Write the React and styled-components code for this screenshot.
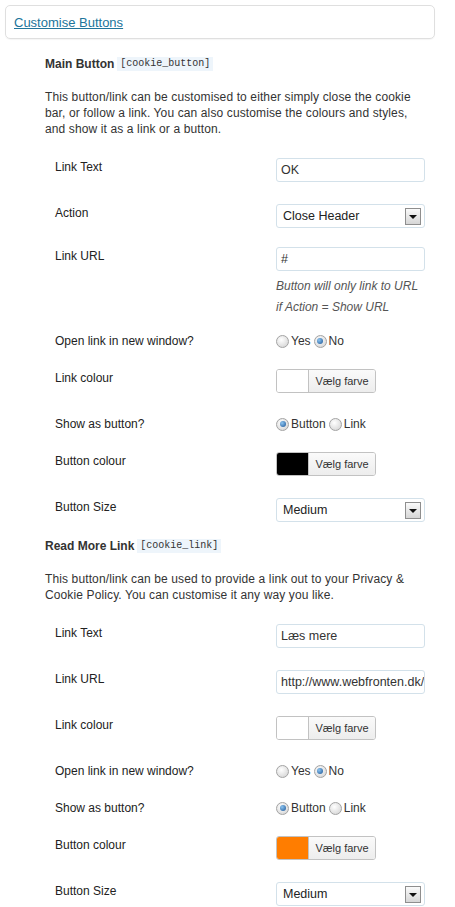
import React from 'react'
import styled, { createGlobalStyle } from 'styled-components'

const GlobalStyle = createGlobalStyle`
  body {
    margin: 0;
    background: #fff;
    font-family: "Liberation Sans", Arial, sans-serif;
    font-size: 12px;
    color: #333;
  }
`

const Page = styled.div`
  padding: 5px;
  width: 445px;
  box-sizing: border-box;
`

const Postbox = styled.div`
  width: 430px;
  height: 34px;
  box-sizing: border-box;
  border: 1px solid #dfdfdf;
  border-radius: 5px;
  padding: 0 8px;
  display: flex;
  align-items: center;
  margin-bottom: 18px;
  box-shadow: 0 1px 1px rgba(0, 0, 0, 0.04);
`

const PostboxTitle = styled.a`
  font-size: 13px;
  color: #21759b;
  text-decoration: underline;
  cursor: pointer;
`

const Section = styled.div`
  padding-left: 40px;
`

const Heading = styled.h4`
  margin: 3px 0 0;
  display: flex;
  align-items: center;
  gap: 3px;
  height: 14px;
  font-size: 12px;
  font-weight: bold;
  color: #333;
`

const Code = styled.code`
  font-family: "Liberation Mono", "DejaVu Sans Mono", monospace;
  font-size: 10px;
  font-weight: normal;
  line-height: 14px;
  padding: 0 3px;
  background: #eef5fb;
  color: #333;
`

const Intro = styled.p`
  margin: 18px 0 13px;
  width: 375px;
  line-height: 16px;
  letter-spacing: 0.12px;
`

const Table = styled.div`
  display: flex;
  flex-direction: column;
`

const Row = styled.div`
  display: grid;
  grid-template-columns: 231px 150px;
  height: ${p => p.$h}px;
`

const Label = styled.div`
  padding: 10px 0 0 10px;
  line-height: 14px;
  color: #222;
`

const Cell = styled.div`
  padding-top: ${p => p.$pt}px;
`

const TextInput = styled.div`
  width: 149px;
  height: 24px;
  box-sizing: border-box;
  border: 1px solid #d3e1ea;
  border-radius: 3px;
  padding: 0 4px;
  font-size: 12.5px;
  line-height: 22px;
  color: #333;
  white-space: nowrap;
  overflow: hidden;
`

const Select = styled.div`
  width: 149px;
  height: 24px;
  box-sizing: border-box;
  border: 1px solid #d3e1ea;
  border-radius: 3px;
  padding: 0 3px 0 6px;
  display: flex;
  align-items: center;
  justify-content: space-between;
  font-size: 12.5px;
  color: #222;
`

const Arrow = styled.span`
  width: 16px;
  height: 17px;
  box-sizing: border-box;
  border: 1px solid #8e8e8e;
  background: linear-gradient(#fafafa, #d6d6d6);
  display: flex;
  align-items: center;
  justify-content: center;

  &::after {
    content: '';
    border-left: 4px solid transparent;
    border-right: 4px solid transparent;
    border-top: 4px solid #111;
    margin-top: 1px;
  }
`

const Description = styled.div`
  margin-top: 5px;
  font-style: italic;
  line-height: 21px;
  color: #555;
`

const RadioGroup = styled.div`
  display: flex;
  align-items: center;
  height: 20px;
  color: #333;
`

const RadioOption = styled.label`
  display: flex;
  align-items: center;
  gap: 2px;
  margin-right: 3px;
`

const RadioDot = styled.span`
  width: 13px;
  height: 13px;
  box-sizing: border-box;
  border-radius: 50%;
  border: 1px solid #a3a3a3;
  background: radial-gradient(circle at 40% 35%, #ffffff, #cfcfcf);
  display: flex;
  align-items: center;
  justify-content: center;

  &::after {
    content: '';
    display: ${p => (p.$checked ? 'block' : 'none')};
    width: 6px;
    height: 6px;
    border-radius: 50%;
    background: radial-gradient(circle at 35% 35%, #8cc4f0, #1c5596);
  }
`

const ColorPicker = styled.div`
  display: flex;
  width: 100px;
  height: 24px;
  box-sizing: border-box;
  border: 1px solid #c2c2c2;
  border-radius: 3px;
  overflow: hidden;
`

const Swatch = styled.span`
  width: 31px;
  background: ${p => p.$color};
  border-right: 1px solid #c2c2c2;
`

const PickButton = styled.span`
  flex: 1;
  display: flex;
  align-items: center;
  justify-content: center;
  font-size: 11px;
  color: #333;
  background: linear-gradient(#fafafa, #ededed);
`

const HEIGHTS = { text: 46, select: 43, color: 46, radio: 37, url: 85 }

const Radios = ({ options, checked }) => (
  <RadioGroup>
    {options.map(o => (
      <RadioOption key={o}>
        <RadioDot $checked={o === checked} />
        {o}
      </RadioOption>
    ))}
  </RadioGroup>
)

const renderControl = row => {
  switch (row.kind) {
    case 'text':
      return <TextInput>{row.value}</TextInput>
    case 'url':
      return (
        <>
          <TextInput>{row.value}</TextInput>
          <Description>
            Button will only link to URL
            <br />
            if Action = Show URL
          </Description>
        </>
      )
    case 'select':
      return (
        <Select>
          {row.value}
          <Arrow />
        </Select>
      )
    case 'color':
      return (
        <ColorPicker>
          <Swatch $color={row.value} />
          <PickButton>Vælg farve</PickButton>
        </ColorPicker>
      )
    case 'radio':
      return <Radios options={row.options} checked={row.value} />
    default:
      return null
  }
}

const sections = [
  {
    title: 'Main Button',
    code: '[cookie_button]',
    intro:
      'This button/link can be customised to either simply close the cookie bar, or follow a link. You can also customise the colours and styles, and show it as a link or a button.',
    rows: [
      { label: 'Link Text', kind: 'text', value: 'OK' },
      { label: 'Action', kind: 'select', value: 'Close Header', h: 43 },
      { label: 'Link URL', kind: 'url', value: '#' },
      { label: 'Open link in new window?', kind: 'radio', options: ['Yes', 'No'], value: 'No' },
      { label: 'Link colour', kind: 'color', value: '#fff' },
      { label: 'Show as button?', kind: 'radio', options: ['Button', 'Link'], value: 'Button' },
      { label: 'Button colour', kind: 'color', value: '#000' },
      { label: 'Button Size', kind: 'select', value: 'Medium', h: 46 },
    ],
  },
  {
    title: 'Read More Link',
    code: '[cookie_link]',
    intro:
      'This button/link can be used to provide a link out to your Privacy & Cookie Policy. You can customise it any way you like.',
    rows: [
      { label: 'Link Text', kind: 'text', value: 'Læs mere' },
      { label: 'Link URL', kind: 'text', value: 'http://www.webfronten.dk/privatlivspolitik' },
      { label: 'Link colour', kind: 'color', value: '#fff' },
      { label: 'Open link in new window?', kind: 'radio', options: ['Yes', 'No'], value: 'No' },
      { label: 'Show as button?', kind: 'radio', options: ['Button', 'Link'], value: 'Button' },
      { label: 'Button colour', kind: 'color', value: '#ff7d00' },
      { label: 'Button Size', kind: 'select', value: 'Medium', h: 46 },
    ],
  },
]

const App = () => {
  return (
    <>
      <GlobalStyle />
      <Page>
        <Postbox>
          <PostboxTitle>Customise Buttons</PostboxTitle>
        </Postbox>
        {sections.map(s => (
          <Section key={s.title}>
            <Heading>
              {s.title}
              <Code>{s.code}</Code>
            </Heading>
            <Intro>{s.intro}</Intro>
            <Table>
              {s.rows.map(r => (
                <Row key={r.label} $h={r.h || HEIGHTS[r.kind]}>
                  <Label>{r.label}</Label>
                  <Cell $pt={r.kind === 'radio' ? 7 : 8}>{renderControl(r)}</Cell>
                </Row>
              ))}
            </Table>
          </Section>
        ))}
      </Page>
    </>
  )
}

export default App
